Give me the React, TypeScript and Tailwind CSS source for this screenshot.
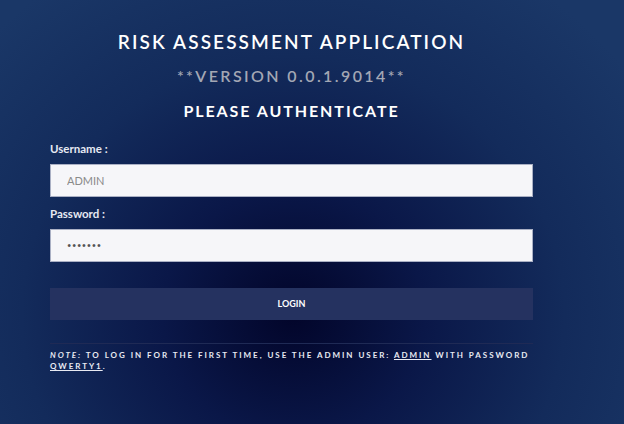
export default function App() {
  return (
    <div
      className="min-h-screen w-full bg-[radial-gradient(ellipse_at_47%_74%,#02052a_0%,#0a1748_28%,#132b5b_58%,#1a3767_90%)] font-['Lato',sans-serif]"
    >
      <div className="w-[483px] ml-[50px] pt-[31px]">
        {/* Header */}
        <h1 className="text-center text-white text-[19px] font-semibold tracking-[0.11em] leading-[22px]">
          RISK ASSESSMENT APPLICATION
        </h1>
        <p className="text-center text-[#a3a7b4] text-[16px] font-semibold tracking-[0.15em] leading-[20px] mt-[13px]">
          **VERSION 0.0.1.9014**
        </p>
        <h2 className="text-center text-white text-[16px] font-bold tracking-[0.12em] leading-[20px] mt-[15px]">
          PLEASE AUTHENTICATE
        </h2>

        {/* Form */}
        <form className="mt-[21px]" onSubmit={(e) => e.preventDefault()}>
          <label className="block text-[#e6e9f2] text-[11.5px] font-bold leading-[14px]">Username :</label>
          <input
            type="text"
            placeholder="ADMIN"
            className="mt-[8px] block w-full h-[33px] bg-[#f6f6f9] border border-[#aab0c4] px-[16px] text-[11px] text-[#555] placeholder:text-[#8a8a8a] outline-none"
          />
          <label className="block text-[#e6e9f2] text-[11.5px] font-bold leading-[14px] mt-[10px]">Password :</label>
          <input
            type="password"
            defaultValue="1234567"
            className="mt-[8px] block w-full h-[33px] bg-[#f6f6f9] border border-[#aab0c4] px-[16px] text-[7.5px] text-[#555] tracking-[0.08em] outline-none"
          />
          <button
            type="submit"
            className="mt-[26px] block w-full h-[32px] bg-[#253260] text-white text-[9px] font-bold"
          >
            LOGIN
          </button>
        </form>

        <div className="mt-[23px] border-t border-[#1f2a55]" />
        <p className="mt-[6px] text-[#e8eaf2] text-[8px] font-bold tracking-[0.245em] leading-[11px]">
          <em>NOTE:</em> TO LOG IN FOR THE FIRST TIME, USE THE ADMIN USER: <u>ADMIN</u> WITH PASSWORD{" "}
          <u>QWERTY1</u>.
        </p>
      </div>
    </div>
  );
}
